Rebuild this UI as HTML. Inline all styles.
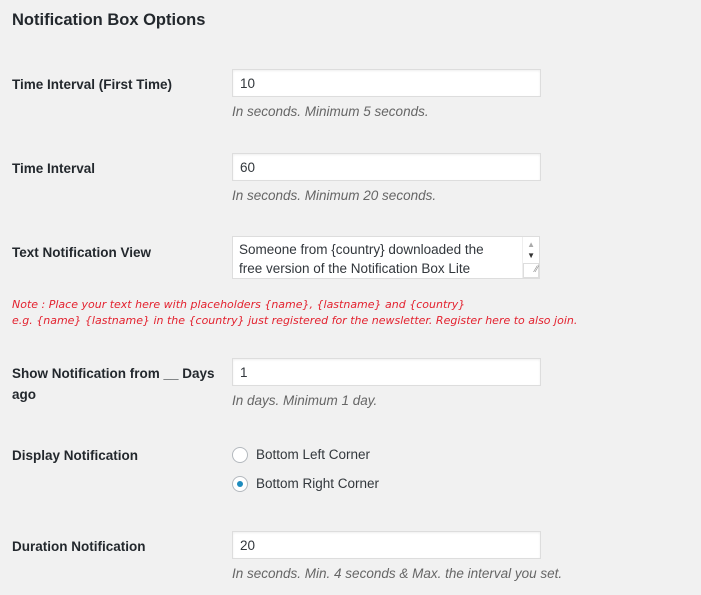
<!DOCTYPE html>
<html><head><meta charset="utf-8"><style>
body{margin:0;background:#f1f1f1;font-family:"Liberation Sans",sans-serif;color:#23282d;width:701px;height:595px;overflow:hidden;position:relative}
.a{position:absolute}
h2{position:absolute;left:12px;top:11px;margin:0;font-size:16.5px;font-weight:bold;color:#23282d}
.l{position:absolute;left:12px;font-size:13.5px;font-weight:bold;color:#23282d;line-height:21px}
.in{position:absolute;left:232px;width:307px;height:26px;background:#fff;border:1px solid #ddd;box-shadow:inset 0 1px 2px rgba(0,0,0,.07);font-size:13.5px;line-height:27px;padding-left:7px;box-sizing:content-box;color:#32373c}
.d{position:absolute;left:232px;font-size:13.5px;font-style:italic;color:#666}
.n{position:absolute;left:12px;font-family:"DejaVu Sans",sans-serif;font-style:italic;font-size:11px;color:#e3222f;line-height:16px;white-space:nowrap}
.r{position:absolute;left:232px;width:16px;height:16px;border:1px solid #b4b9be;border-radius:50%;background:#fff;box-sizing:border-box}
.rt{position:absolute;left:256px;font-size:13.5px;color:#32373c}
</style></head><body>
<h2>Notification Box Options</h2>
<div class="l" style="top:74px">Time Interval (First Time)</div>
<div class="in" style="top:69px;width:300px">10</div>
<div class="d" style="top:104px">In seconds. Minimum 5 seconds.</div>
<div class="l" style="top:158px">Time Interval</div>
<div class="in" style="top:153px;width:300px">60</div>
<div class="d" style="top:188px">In seconds. Minimum 20 seconds.</div>
<div class="l" style="top:242px">Text Notification View</div>
<div class="a" style="left:232px;top:236px;width:308px;height:43px;background:#fff;border:1px solid #ddd;box-sizing:border-box">
<div class="a" style="left:6px;top:3px;font-size:13.5px;line-height:19px;color:#32373c">Someone from {country} downloaded the<br>free version of the Notification Box Lite</div>
<div class="a" style="right:0;top:0;width:16px;height:41px;background:#fff;border-left:1px solid #eee"></div>
<div class="a" style="right:4px;top:3px;font-size:8px;color:#aaa">▲</div>
<div class="a" style="right:4px;top:14px;font-size:8px;color:#333">▼</div>
<div class="a" style="right:0;bottom:0;width:14px;height:13px;background:#fff;border:1px solid #ddd;font-size:9px;color:#888;line-height:11px;text-align:right">⁄⁄</div>
</div>
<div class="n" style="top:297px">Note : Place your text here with placeholders {name}, {lastname} and {country}<br>e.g. {name} {lastname} in the {country} just registered for the newsletter. Register here to also join.</div>
<div class="l" style="top:363px;width:210px">Show Notification from __ Days ago</div>
<div class="in" style="top:358px;width:300px">1</div>
<div class="d" style="top:393px">In days. Minimum 1 day.</div>
<div class="l" style="top:445px">Display Notification</div>
<div class="r" style="top:447px"></div><div class="rt" style="top:447px">Bottom Left Corner</div>
<div class="r" style="top:476px"><div class="a" style="left:4px;top:4px;width:6px;height:6px;border-radius:50%;background:#1e8cbe"></div></div><div class="rt" style="top:476px">Bottom Right Corner</div>
<div class="l" style="top:536px">Duration Notification</div>
<div class="in" style="top:531px;width:300px">20</div>
<div class="d" style="top:566px">In seconds. Min. 4 seconds &amp; Max. the interval you set.</div>
</body></html>
